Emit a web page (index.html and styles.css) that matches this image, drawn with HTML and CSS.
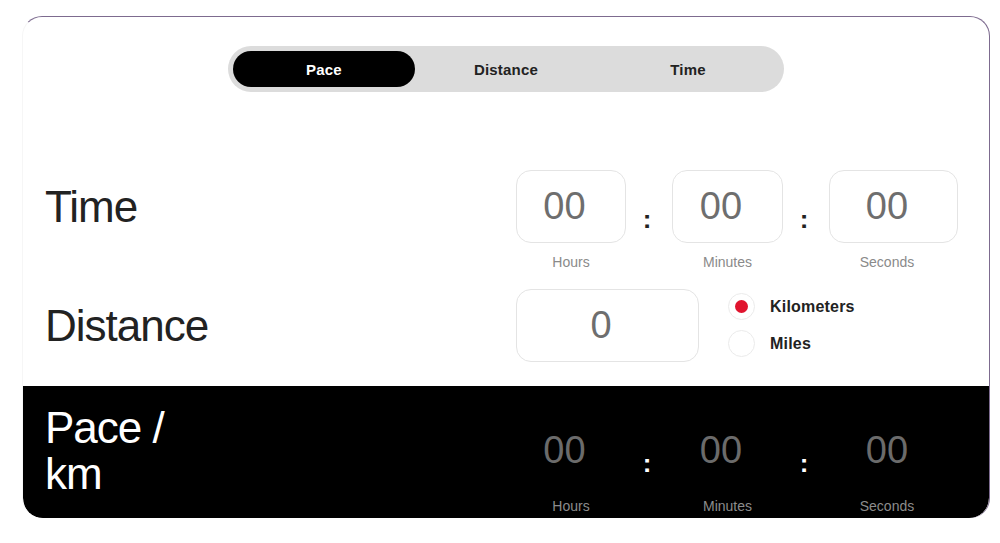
FILE: index.html
```html
<!DOCTYPE html>
<html lang="en">
<head>
    <meta charset="UTF-8">
    <title>Pace calculator</title>
    <link rel="stylesheet" href="styles.css">
</head>
<body>

<div class="card">
    <div class="tabs-wrap">
        <div class="tabs">
            <div class="tab active">Pace</div>
            <div class="tab">Distance</div>
            <div class="tab">Time</div>
        </div>
    </div>

    <div class="row row-time">
        <div class="label">Time</div>
        <div class="fields">
            <div class="field f-h"><div class="box">00</div><div class="cap">Hours</div></div>
            <div class="colon">:</div>
            <div class="field f-m"><div class="box">00</div><div class="cap">Minutes</div></div>
            <div class="colon">:</div>
            <div class="field f-s"><div class="box">00</div><div class="cap">Seconds</div></div>
        </div>
    </div>

    <div class="row row-distance">
        <div class="label">Distance</div>
        <div class="box box-distance">0</div>
        <div class="units">
            <div class="unit"><span class="radio checked"></span>Kilometers</div>
            <div class="unit"><span class="radio"></span>Miles</div>
        </div>
    </div>

    <div class="result">
        <div class="row">
            <div class="label">Pace /<br>km</div>
            <div class="fields">
                <div class="field f-h"><div class="box">00</div><div class="cap">Hours</div></div>
                <div class="colon">:</div>
                <div class="field f-m"><div class="box">00</div><div class="cap">Minutes</div></div>
                <div class="colon">:</div>
                <div class="field f-s"><div class="box">00</div><div class="cap">Seconds</div></div>
            </div>
        </div>
    </div>
</div>

</body>
</html>
```

FILE: styles.css
```css
body {
    margin: 0;
    background: #fff;
    font-family: "Liberation Sans", Arial, sans-serif;
    color: #222;
}

.card {
    box-sizing: border-box;
    width: 968px;
    height: 502px;
    margin: 16px 0 0 22px;
    border: 1px solid #7d6b8f;
    border-left-color: #f6f6f6;
    border-bottom: none;
    border-radius: 20px;
    overflow: hidden;
    display: flex;
    flex-direction: column;
}

.tabs-wrap {
    display: flex;
    justify-content: center;
    padding-top: 29px;
}

.tabs {
    width: 546px;
    height: 36px;
    padding: 5px;
    background: #dcdcdc;
    border-radius: 23px;
    display: grid;
    grid-template-columns: repeat(3, 1fr);
}

.tab {
    display: flex;
    align-items: center;
    justify-content: center;
    font-size: 15px;
    font-weight: bold;
    color: #222;
    border-radius: 18px;
    letter-spacing: 0.2px;
}

.tab.active {
    background: #000;
    color: #fff;
}

.row {
    display: flex;
    align-items: flex-start;
    padding-left: 22px;
}

.row-time {
    margin-top: 78px;
}

.row-distance {
    margin-top: 19px;
}

.label {
    width: 471px;
    height: 73px;
    display: flex;
    align-items: center;
    font-size: 44px;
    line-height: 46px;
    letter-spacing: -1px;
    color: #222;
}

.fields {
    display: flex;
}

.f-h { width: 110px; }
.f-m { width: 111px; }
.f-s { width: 129px; }

/* inputs keep their text a little left of centre */
.box {
    box-sizing: border-box;
    height: 73px;
    padding-right: 13px;
    border: 1px solid #e4e4e4;
    border-radius: 15px;
    display: flex;
    align-items: center;
    justify-content: center;
    font-size: 38px;
    color: #6e6e6e;
}

.cap {
    margin-top: 11px;
    font-size: 14px;
    line-height: 16px;
    text-align: center;
    color: #8a8a8a;
}

.f-s .cap {
    padding-right: 13px;
}

.colon {
    box-sizing: border-box;
    width: 46px;
    margin-top: 36px;
    padding-right: 4px;
    text-align: center;
    font-size: 26px;
    line-height: 1;
    font-weight: bold;
    color: #222;
}

.box-distance {
    width: 183px;
}

.units {
    margin-left: 29px;
    padding-top: 4px;
    display: flex;
    flex-direction: column;
    gap: 10px;
}

.unit {
    display: flex;
    align-items: center;
    height: 27px;
    font-size: 16px;
    font-weight: bold;
    letter-spacing: 0.2px;
    color: #222;
}

.radio {
    box-sizing: border-box;
    width: 27px;
    height: 27px;
    margin-right: 15px;
    border: 1px solid #ebebeb;
    border-radius: 50%;
    display: flex;
    align-items: center;
    justify-content: center;
}

.radio.checked::after {
    content: "";
    width: 13px;
    height: 13px;
    border-radius: 50%;
    background: #e0142e;
}

.result {
    flex: 1;
    margin-top: 24px;
    padding-top: 28px;
    background: #000;
    border-radius: 0 0 20px 20px;
}

.result .label {
    color: #fff;
}

.result .box {
    border-color: #000;
    color: #6b6b6b;
}

.result .colon {
    color: #fff;
}

.result .cap {
    color: #8c8c8c;
}
```
